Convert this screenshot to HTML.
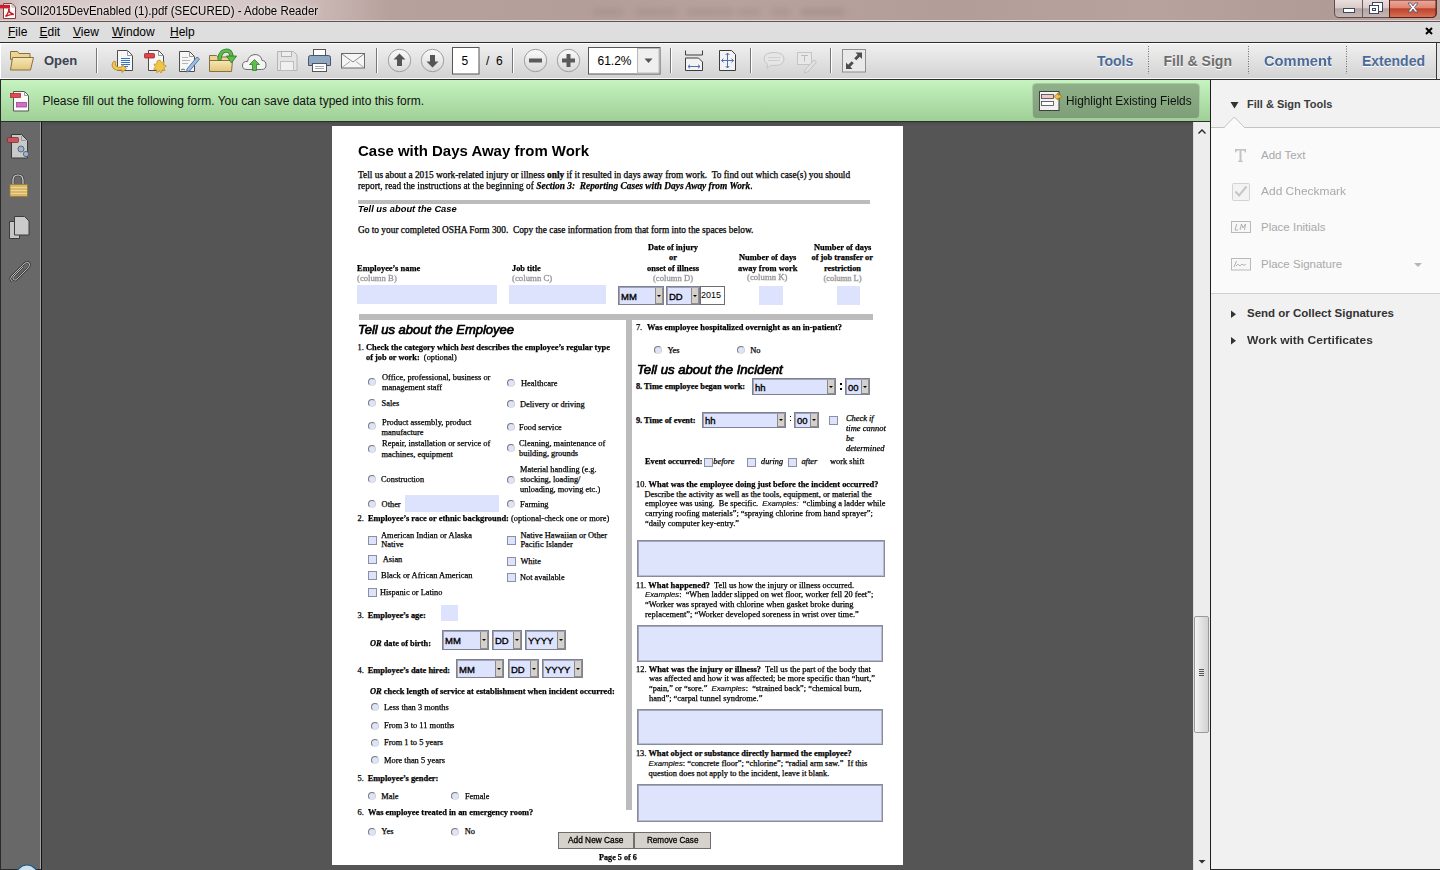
<!DOCTYPE html>
<html><head><meta charset="utf-8"><title>Adobe Reader</title>
<style>
*{margin:0;padding:0;box-sizing:border-box}
html,body{width:1440px;height:870px;overflow:hidden;background:#555555;font-family:"Liberation Sans",sans-serif;position:relative}
.a{position:absolute}
.bx{box-sizing:border-box}
.t{position:absolute;white-space:nowrap;line-height:1;color:#000;transform-origin:0 0}
.se{font-family:"Liberation Serif",serif;-webkit-text-stroke:0.25px #000}
.se.g{-webkit-text-stroke:0.35px #9a9a9a}
.sa{font-family:"Liberation Sans",sans-serif}
i.sa{font-style:italic;font-size:0.93em;-webkit-text-stroke:0.15px #000}
.g{color:#9a9a9a}
.rd{width:8px;height:8px;border-radius:50%;border:1px solid #7a7a7a;border-right-color:#d0d0d0;border-bottom-color:#dcdcdc;background:#dde3fc}
.cb{width:9px;height:9px;border:1px solid #8b8f9f;background:#dde3fc}
.dd{position:absolute;background:#dde3fc;border:1px solid #7c8092;box-shadow:inset 1px 1px 0 #9ea3b8}
.ddl{position:absolute;left:2px;top:1px;font-family:"Liberation Sans",sans-serif;font-size:9.5px;color:#000;-webkit-text-stroke:0.35px #000}
.ddb{position:absolute;right:0.5px;top:0.5px;bottom:0.5px;background:#d5d1ca;border-left:1px solid #8a8a8a;box-shadow:inset -1px -1px 0 #8f8f8f}
.ddb i{position:absolute;left:50%;top:50%;margin-left:-2px;margin-top:-1px;border-left:2px solid transparent;border-right:2px solid transparent;border-top:2px solid #000}
.box2015{position:absolute;background:#fff;border:1px solid #6e6e6e;font-size:9px;line-height:17px;padding-left:0.5px;color:#000}
.colon{font-family:"Liberation Serif",serif;font-size:9px;font-weight:bold;line-height:1}
.mn{color:#000}
.mn u{text-decoration:underline;text-underline-offset:1px}
.tb{font-weight:bold;text-shadow:0 1px 0 #fff}
.rp{font-size:11.5px;color:#a9a9a9}

.hd{-webkit-text-stroke:0.7px #000}
.dot{position:absolute;width:1.6px;height:1.6px;background:#000}
.btn{-webkit-text-stroke:0.3px #000}

</style></head><body>
<div class="a" style="left:0;top:0;width:1440px;height:21px;background:linear-gradient(90deg,#c9b7b4 0%,#d6c9c7 1.5%,#d5c8c6 19%,#c9b6b3 22.5%,#b7a19d 27%,#b49e9a 40%,#b8a29e 52%,#b39d99 66%,#b7a29e 80%,#b19b97 92%,#bba6a3 100%)"></div>
<div class="a" style="left:0;top:0;width:1440px;height:21px;filter:blur(3px);opacity:0.55"><div class="a" style="left:593px;top:9px;width:30px;height:6px;background:#a08a86"></div><div class="a" style="left:635px;top:9px;width:42px;height:6px;background:#a08a86"></div><div class="a" style="left:687px;top:9px;width:46px;height:6px;background:#a08a86"></div><div class="a" style="left:738px;top:9px;width:22px;height:6px;background:#a08a86"></div><div class="a" style="left:771px;top:9px;width:19px;height:6px;background:#a08a86"></div><div class="a" style="left:801px;top:9px;width:44px;height:6px;background:#9a8480"></div></div>
<div class="a" style="left:0;top:20px;width:1440px;height:1px;background:#e3d6d4"></div>
<div class="a" style="left:0;top:21px;width:1440px;height:1px;background:#5e5453"></div>
<div class="a" style="left:0;top:22px;width:1440px;height:20px;background:#dedede"></div>
<div class="a" style="left:0;top:42px;width:1440px;height:1px;background:#2b2b2b"></div>
<div class="a" style="left:0;top:43px;width:1440px;height:36px;background:linear-gradient(#efefef,#e4e4e4 40%,#d3d3d3);border-top:1px solid #fff;border-left:1px solid #fff;border-bottom:1px solid #fafafa"></div>
<div class="a" style="left:1436px;top:43px;width:1px;height:36px;background:#3a3a3a"></div>
<div class="a" style="left:1437px;top:43px;width:3px;height:36px;background:#e6e6e6"></div>
<div class="a" style="left:0;top:79px;width:1440px;height:1px;background:#2f2f2f"></div>
<div class="a" style="left:0;top:80px;width:1210px;height:41px;background:linear-gradient(#c6f3c0,#b4e3ad 45%,#9fd096)"></div>
<div class="a" style="left:0;top:121px;width:41px;height:749px;background:#686868;border-left:1px solid #3a3a3a;border-right:1px solid #a3a3a3"></div>
<div class="a" style="left:41px;top:121px;width:1px;height:749px;background:#111"></div>
<div class="a" style="left:1193px;top:121px;width:17px;height:749px;background:#ededed;border-left:1px solid #dcdcdc"></div>
<div class="a" style="left:1194px;top:616px;width:15px;height:117px;border:1px solid #9a9a9a;border-radius:2px;background:linear-gradient(90deg,#f4f4f4,#e2e2e2 50%,#d2d2d2)"></div>
<div class="a" style="left:1210px;top:80px;width:1px;height:790px;background:#1e1e1e"></div>
<div class="a" style="left:1211px;top:80px;width:229px;height:47px;background:#f2f2f2"></div>
<div class="a" style="left:1211px;top:127px;width:229px;height:166px;background:#fafafa;border-top:1px solid #c3c3c3"></div>
<div class="a" style="left:1211px;top:293px;width:229px;height:577px;background:#f1f1f1;border-top:1px solid #cfcfcf"></div>
<div class="a" style="left:1210px;top:869px;width:230px;height:1px;background:#2a2a2a"></div>
<div class="a" style="left:0;top:869px;width:41px;height:1px;background:#2a2a2a"></div>
<div class="a" style="left:0;top:121px;width:1210px;height:1px;background:#2e2e2e"></div>
<div class="a" style="left:0;top:80px;width:1px;height:790px;background:#2a2a2a"></div>
<div class="a" style="left:42px;top:122px;width:1151px;height:4px;background:linear-gradient(#4a4a4a,#555)"></div>
<!-- highlight button -->
<div class="a" style="left:1032px;top:83px;width:168px;height:36px;border-radius:4px;background:linear-gradient(#8fb089,#7e9f78);border:1px solid #a9c9a3"></div>

<svg class="a" style="left:0;top:0" width="1440" height="870" viewBox="0 0 1440 870">
 <defs>
  <linearGradient id="gmin" x1="0" y1="0" x2="0" y2="1"><stop offset="0" stop-color="#eadfdd"/><stop offset="0.45" stop-color="#d9cbc9"/><stop offset="0.5" stop-color="#b4a3a1"/><stop offset="1" stop-color="#c7b8b6"/></linearGradient>
  <linearGradient id="gcls" x1="0" y1="0" x2="0" y2="1"><stop offset="0" stop-color="#eeaa9c"/><stop offset="0.45" stop-color="#dd8572"/><stop offset="0.5" stop-color="#c0402a"/><stop offset="1" stop-color="#d8735a"/></linearGradient>
  <linearGradient id="gcirc" x1="0" y1="0" x2="0" y2="1"><stop offset="0" stop-color="#fafafa"/><stop offset="1" stop-color="#d9d9d9"/></linearGradient>
  <linearGradient id="gfold" x1="0" y1="0" x2="0" y2="1"><stop offset="0" stop-color="#f7e7b4"/><stop offset="1" stop-color="#e2c67e"/></linearGradient>
 </defs>
 <!-- title pdf icon -->
 <path d="M3.5,3.5 h8.5 l3.5,3.5 v11.5 h-12 z" fill="#fbfbfb" stroke="#8c3a40"/>
 <path d="M12,3.5 v3.5 h3.5" fill="none" stroke="#999" stroke-width="0.8"/>
 <rect x="0" y="4.8" width="10" height="3.6" fill="#c9202f"/>
 <path d="M5.5,16.5 q2,-2 3.5,-6 q0.5,-1.5 0,-1.5 q-0.6,0 -0.2,1.5 q1,3 5,4 q-3,-0.5 -8.3,2 z" fill="none" stroke="#c01a22" stroke-width="1.3"/>
 <!-- window buttons -->
 <path d="M1334.5,0 v13 q0,4.5 4.5,4.5 h93 q4.5,0 4.5,-4.5 v-13" fill="url(#gmin)" stroke="#5b4d4c"/>
 <path d="M1389.5,0 v17.5 h42 q4.5,0 4.5,-4.5 v-13 z" fill="url(#gcls)" stroke="#5a1d12"/>
 <line x1="1362.5" y1="0" x2="1362.5" y2="17.5" stroke="#6a5c5b"/>
 <rect x="1343.5" y="8.5" width="11" height="4" fill="#fff" stroke="#3c4660"/>
 <rect x="1372.5" y="2.5" width="10" height="9" fill="#fff" stroke="#3c4660"/>
 <rect x="1369.5" y="5.5" width="9" height="8" fill="#fff" stroke="#3c4660"/>
 <rect x="1372.5" y="8.5" width="3" height="2" fill="none" stroke="#3c4660"/>
 <path d="M1408,3 l3,0 l2,3 l2,-3 l3,0 l-3.5,4.5 l3.5,4.5 l-3,0 l-2,-3 l-2,3 l-3,0 l3.5,-4.5 z" fill="#fff" stroke="#4a4f66" stroke-width="0.8"/>
 <!-- menu close -->
 <path d="M1426,28 l6,6 M1432,28 l-6,6" stroke="#000" stroke-width="2"/>

 <!-- toolbar: folder open -->
 <path d="M10.5,51.5 h7 l1.5,2 h11 v6 h-19.5 z" fill="#ecd594" stroke="#8b6f3e"/>
 <path d="M12.5,57.5 h21 l-3,12.5 h-20 z" fill="url(#gfold)" stroke="#8b6f3e"/>
 <!-- separators -->
 <g stroke="#777" stroke-width="1">
  <line x1="96.5" y1="48" x2="96.5" y2="73"/><line x1="376.5" y1="48" x2="376.5" y2="73"/><line x1="512.5" y1="48" x2="512.5" y2="73"/>
  <line x1="670.5" y1="48" x2="670.5" y2="73"/><line x1="750.5" y1="48" x2="750.5" y2="73"/><line x1="830.5" y1="48" x2="830.5" y2="73"/>
 </g>
 <g stroke="#fff" stroke-width="1">
  <line x1="97.5" y1="48" x2="97.5" y2="73"/><line x1="377.5" y1="48" x2="377.5" y2="73"/><line x1="513.5" y1="48" x2="513.5" y2="73"/>
  <line x1="671.5" y1="48" x2="671.5" y2="73"/><line x1="751.5" y1="48" x2="751.5" y2="73"/><line x1="831.5" y1="48" x2="831.5" y2="73"/>
 </g>
 <!-- icon1: doc + blue lines + arrow -->
 <path d="M117.5,50.5 h10 l5,5 v15 h-15 z" fill="#f6f6f6" stroke="#4d4d4d"/>
 <path d="M127.5,50.5 v5 h5" fill="none" stroke="#9a9a9a"/>
 <g stroke="#2f74d0" stroke-width="1"><line x1="121" y1="58.5" x2="130" y2="58.5"/><line x1="121" y1="60.5" x2="130" y2="60.5"/><line x1="121" y1="62.5" x2="130" y2="62.5"/><line x1="121" y1="64.5" x2="130" y2="64.5"/><line x1="124" y1="66.5" x2="128" y2="66.5"/></g>
 <path d="M114,61 q-4,4 0,8 q3,2 8,1 v2.5 l4.5,-4 l-4.5,-4 v2.5 q-4,1 -6,-1 q-1.5,-2 0,-4 z" fill="#f2c650" stroke="#b58a2c" stroke-width="0.9"/>
 <!-- icon2: doc + red bar + star -->
 <path d="M148.5,50.5 h10 l5,5 v15 h-15 z" fill="#f6f6f6" stroke="#4d4d4d"/>
 <path d="M158.5,50.5 v5 h5" fill="none" stroke="#9a9a9a"/>
 <rect x="144.5" y="53.5" width="10" height="4.5" rx="0.8" fill="#e2434b" stroke="#9b2a2e" stroke-width="0.8"/>
 <path d="M160,60 l1.4,2.6 l2.8,-0.9 l-0.6,2.9 l2.7,1.3 l-2.4,1.8 l1.2,2.7 l-3,-0.2 l-0.9,2.8 l-2,-2.2 l-2.3,1.9 l-0.3,-2.9 l-2.9,-0.6 l1.8,-2.4 l-1.6,-2.5 l2.9,-0.4 l0.4,-3 z" fill="#f0c648" stroke="#c0922c" stroke-width="0.8"/>
 <!-- icon3: doc + pen -->
 <path d="M179.5,51.5 h10 l5,5 v15 h-15 z" fill="#f6f6f6" stroke="#4d4d4d"/>
 <path d="M189.5,51.5 v5 h5" fill="none" stroke="#9a9a9a"/>
 <g stroke="#b5b5b5"><line x1="182" y1="57.5" x2="188" y2="57.5"/><line x1="182" y1="60.5" x2="190" y2="60.5"/><line x1="182" y1="63.5" x2="188" y2="63.5"/></g>
 <path d="M187,69 l10,-12 l2.5,2 l-10,12 l-3,1 z" fill="#9cc0e8" stroke="#4c6d95" stroke-width="0.9"/>
 <path d="M181,70 q2,-2 4,0" fill="none" stroke="#444" stroke-width="0.8"/>
 <!-- icon4: folder + green arrow -->
 <path d="M209.5,55.5 h7 l1.5,1.5 h12 v5 h-20.5 z" fill="#ecd594" stroke="#8b6f3e"/>
 <path d="M209.5,60.5 h23 l-1,11 h-22 z" fill="url(#gfold)" stroke="#8b6f3e"/>
 <path d="M219.5,59 q0.5,-8 7,-8.5 q4.5,0 5,6" fill="none" stroke="#2f7d25" stroke-width="4.2" stroke-linecap="round"/>
 <path d="M219.5,59 q0.5,-8 7,-8.5 q4.5,0 5,6" fill="none" stroke="#5cbb4c" stroke-width="2.6" stroke-linecap="round"/>
 <path d="M226.5,56 h10 l-5,7 z" fill="#5cbb4c" stroke="#2f7d25" stroke-width="0.9"/>
 <!-- icon5: cloud + arrow -->
 <path d="M247,69.5 q-5,0 -4.5,-4.5 q0.5,-4 5,-3.5 q1,-6.5 7.5,-7 q6,0 7,6 q4,0 4,4.5 q0,4.5 -4.5,4.5 z" fill="#f4f4f4" stroke="#6f6f6f" stroke-width="1"/>
 <path d="M254.5,59.5 l5,5 h-3 v6 h-4 v-6 h-3 z" fill="#5fbd4f" stroke="#2f7e27" stroke-width="0.8"/>
 <!-- icon6: floppy disabled -->
 <path d="M277.5,51.5 h16 l3.5,3.5 v15.5 h-19.5 z" fill="#e4e4e4" stroke="#b4b4b4"/>
 <rect x="281.5" y="51.5" width="10" height="5" fill="#eeeeee" stroke="#b4b4b4"/>
 <rect x="280.5" y="61.5" width="13" height="9" fill="#f0f0f0" stroke="#bdbdbd"/>
 <!-- icon7: printer -->
 <rect x="313.5" y="49.5" width="12" height="7" fill="#fff" stroke="#555"/>
 <path d="M308.5,57.5 q0,-2 2,-2 h18 q2,0 2,2 v8 h-22 z" fill="#8fa9c4" stroke="#47566b"/>
 <rect x="312.5" y="63.5" width="14" height="8" fill="#fff" stroke="#555"/>
 <line x1="315" y1="66.5" x2="324" y2="66.5" stroke="#aaa"/><line x1="315" y1="68.5" x2="324" y2="68.5" stroke="#aaa"/>
 <!-- icon8: mail -->
 <rect x="341.5" y="53.5" width="23" height="14.5" fill="#f5f5f5" stroke="#6b6b6b"/>
 <path d="M342,54 l11,8 l11,-8" fill="none" stroke="#8a8a8a"/>
 <path d="M342,67.5 l8,-6 M364,67.5 l-8,-6" fill="none" stroke="#a8a8a8"/>
 <!-- up/down/minus/plus circles -->
 <g fill="url(#gcirc)" stroke="#9d9d9d" stroke-width="1">
  <circle cx="399.5" cy="60.5" r="11.2"/><circle cx="432.5" cy="60.5" r="11.2"/><circle cx="535.5" cy="60.5" r="11.2"/><circle cx="568.5" cy="60.5" r="11.2"/>
 </g>
 <path d="M399.5,53.5 l6,6 h-3.5 v6.5 h-5 v-6.5 h-3.5 z" fill="#555"/>
 <path d="M432.5,67.5 l6,-6 h-3.5 v-6.5 h-5 v6.5 h-3.5 z" fill="#555"/>
 <rect x="529" y="58.5" width="13" height="4" fill="#5a5a5a"/>
 <rect x="562" y="58.5" width="13" height="4" fill="#5a5a5a"/><rect x="566.5" y="54" width="4" height="13" fill="#5a5a5a"/>
 <!-- page box -->
 <rect x="452.5" y="47.5" width="26.5" height="26.5" fill="#fff" stroke="#575757"/>
 <!-- zoom combo -->
 <rect x="588.5" y="47.5" width="71.5" height="26.5" fill="#fff" stroke="#575757"/>
 <rect x="637.5" y="48.5" width="21.5" height="24.5" fill="#efefef" stroke="#b9b9b9"/>
 <path d="M644.5,58.5 h8 l-4,4.5 z" fill="#555"/>
 <!-- fit width -->
 <path d="M685.5,50.5 v4.5 h17 v-4.5" fill="none" stroke="#3d3d3d"/>
 <path d="M685.5,70.5 v-12.5 h13 l4,4 v8.5 z" fill="#f3f3f3" stroke="#3d3d3d"/>
 <path d="M688,66.5 h12 M688,66.5 l2,-1.8 M688,66.5 l2,1.8 M700,66.5 l-2,-1.8 M700,66.5 l-2,1.8" stroke="#4f6fb0" fill="none"/>
 <!-- fit page -->
 <path d="M719.5,50.5 h12 l4,4 v16 h-16 z" fill="#f3f3f3" stroke="#3d3d3d"/>
 <path d="M727.5,53 v15 M721.5,60.5 h12 M727.5,53 l-1.8,2 M727.5,53 l1.8,2 M727.5,68 l-1.8,-2 M727.5,68 l1.8,-2 M721.5,60.5 l2,-1.8 M721.5,60.5 l2,1.8 M733.5,60.5 l-2,-1.8 M733.5,60.5 l-2,1.8" stroke="#4f6fb0" fill="none"/>
 <!-- comment disabled -->
 <path d="M774,52.5 q10,0 10,6.5 q0,6.5 -10,6.5 q-1.5,0 -3,-0.4 l-4,3.4 l0.8,-4.4 q-3.8,-2 -3.8,-5.1 q0,-6.5 10,-6.5 z" fill="#e6e6e6" stroke="#c5c5c5"/>
 <g stroke="#cfcfcf"><line x1="768" y1="57.5" x2="780" y2="57.5"/><line x1="768" y1="60.5" x2="780" y2="60.5"/></g>
 <!-- text edit disabled -->
 <rect x="797.5" y="52.5" width="14" height="12" fill="#e8e8e8" stroke="#c5c5c5"/>
 <path d="M801,55.5 h7 M804.5,55.5 v6" stroke="#bcbcbc" fill="none"/>
 <path d="M805,70 l9,-10 l2.5,2 l-9,10 l-3,1 z" fill="#e2e2e2" stroke="#c2c2c2"/>
 <!-- fullscreen -->
 <rect x="842.5" y="49.5" width="23" height="22.5" fill="#e9e9e9" stroke="#8d8d8d"/>
 <path d="M862,52.5 l-6.5,0 l2.2,2.2 l-3.5,3.5 l2.1,2.1 l3.5,-3.5 l2.2,2.2 z" fill="#4d4d4d"/>
 <path d="M846,69 l6.5,0 l-2.2,-2.2 l3.5,-3.5 l-2.1,-2.1 l-3.5,3.5 l-2.2,-2.2 z" fill="#4d4d4d"/>
 <!-- right dotted separators -->
 <g stroke="#6f6f6f" stroke-dasharray="1,1.5"><line x1="1148.5" y1="46" x2="1148.5" y2="74"/><line x1="1248.5" y1="46" x2="1248.5" y2="74"/><line x1="1346.5" y1="46" x2="1346.5" y2="74"/></g>

 <!-- green bar form icon -->
 <path d="M13.5,91.5 h11 l4,4 v15.5 h-15 z" fill="#fbfbfb" stroke="#555"/>
 <path d="M24.5,91.5 v4 h4" fill="none" stroke="#999"/>
 <rect x="10.5" y="93.5" width="10" height="4" fill="#e24a4f" stroke="#a33034" stroke-width="0.8"/>
 <rect x="16.5" y="102.5" width="10" height="4.5" fill="#d36ec6" stroke="#9b4a92" stroke-width="0.8"/>
 <!-- highlight fields icon -->
 <rect x="1039.5" y="91.5" width="19.5" height="19" fill="#f2f2f2" stroke="#3f3f3f"/>
 <rect x="1041.5" y="94.5" width="12" height="4" fill="#f4c7c7" stroke="#444" stroke-width="0.8"/>
 <rect x="1041.5" y="101.5" width="12" height="4" fill="#fff" stroke="#444" stroke-width="0.8"/>
 <path d="M1054,96.5 l4,-3.5 v2 h3 v3 h-3 v2 z" fill="#f3c241" stroke="#a57b1d" stroke-width="0.8"/>

 <!-- nav icons -->
 <path d="M11.5,134.5 h10 l6,6 v17.5 h-16 z" fill="#c9c9c9" stroke="#383838"/>
 <path d="M21.5,136 v4.5 h4.5" fill="none" stroke="#8a8a8a" stroke-width="0.8"/>
 <rect x="7.5" y="137.5" width="11" height="5" rx="1" fill="#c9545a" stroke="#7d3034" stroke-width="0.8"/>
 <circle cx="21" cy="149" r="3" fill="#9fb5c8" stroke="#50606e" stroke-width="0.9"/>
 <circle cx="26" cy="154" r="2.6" fill="#9fb5c8" stroke="#50606e" stroke-width="0.9"/>
 <path d="M13,185 v-4.5 q0,-5.5 5,-5.5 q5,0 5,5.5 v4.5" fill="none" stroke="#3c3c3c" stroke-width="2.6"/><path d="M13,185 v-4.5 q0,-5.5 5,-5.5 q5,0 5,5.5 v4.5" fill="none" stroke="#d5d5d5" stroke-width="1.2"/>
 <rect x="10" y="184.5" width="17.5" height="12" fill="#d8b768" stroke="#9b7c35" stroke-width="0.8"/>
 <g stroke="#f2dd9e" stroke-width="0.8"><line x1="10.5" y1="187.5" x2="27" y2="187.5"/><line x1="10.5" y1="190.5" x2="27" y2="190.5"/><line x1="10.5" y1="193.5" x2="27" y2="193.5"/></g>
 <path d="M9.5,221.5 h10 v17 h-10 z" fill="#c6c6c6" stroke="#3c3c3c"/>
 <path d="M14.5,216.5 h10 l4.5,4.5 v14 h-14.5 z" fill="#cbcbcb" stroke="#3c3c3c"/>
 <path d="M12,281 q-3,-2 0,-5 l12,-12 q3,-3 5,-1 q2,2 -1,5 l-11,11 q-2,2 -3.5,0.5 q-1.5,-1.5 0.5,-3.5 l9,-9" fill="none" stroke="#3c3c3c" stroke-width="2.4"/><path d="M12,281 q-3,-2 0,-5 l12,-12 q3,-3 5,-1 q2,2 -1,5 l-11,11 q-2,2 -3.5,0.5 q-1.5,-1.5 0.5,-3.5 l9,-9" fill="none" stroke="#b9b9b9" stroke-width="1"/>
 <!-- start orb -->
 <circle cx="27" cy="876" r="11" fill="#cfe0ea" stroke="#1d5a8a" stroke-width="1.2"/>

 <!-- scrollbar arrows -->
 <path d="M1198.5,133.5 l3.5,-3.5 l3.5,3.5" fill="none" stroke="#222" stroke-width="1.3"/>
 <path d="M1198.5,860 l3.5,3.5 l3.5,-3.5 z" fill="#333"/>
 <g stroke="#555"><line x1="1199" y1="669.5" x2="1204" y2="669.5"/><line x1="1199" y1="671.5" x2="1204" y2="671.5"/><line x1="1199" y1="673.5" x2="1204" y2="673.5"/><line x1="1199" y1="675.5" x2="1204" y2="675.5"/></g>

 <!-- right panel -->
 <path d="M1230.5,102 h8 l-4,6.5 z" fill="#333"/>
 <path d="M1224,127.5 l10.3,-10.5 l10.3,10.5" fill="#fafafa" stroke="#c3c3c3"/>
 <rect x="1225" y="127" width="19" height="2" fill="#fafafa"/>
 <path d="M1235,149 h11 v3.5 h-1 q-0.5,-2 -2,-2 h-1.5 v10 l1.5,0.7 v0.8 h-5 v-0.8 l1.5,-0.7 v-10 h-1.5 q-1.5,0 -2,2 h-1 z" fill="#c3c3c3"/>
 <rect x="1232.5" y="183.5" width="17" height="17" rx="1" fill="#f3f3f3" stroke="#d3d3d3"/>
 <path d="M1235.5,191.5 l3.5,4 l7.5,-9" fill="none" stroke="#c6c6c6" stroke-width="2"/>
 <rect x="1231.5" y="221.5" width="19" height="11" fill="#f7f7f7" stroke="#b9b9b9"/>
 <path d="M1235,230 l1.8,-6 M1235,230 h3 M1240,230 l1.5,-6 l1.5,4 l2.5,-4 l-1,6" fill="none" stroke="#a9a9a9" stroke-width="0.9"/>
 <rect x="1231.5" y="258.5" width="19" height="11.5" fill="#f7f7f7" stroke="#b9b9b9"/>
 <path d="M1234,267 l2.5,-6 M1236,266 q2,-3 3,-1 q1,2 2,0 q1,-2 2,0 q1,1 3,-1" fill="none" stroke="#a9a9a9" stroke-width="0.9"/>
 <path d="M1414,263 h8 l-4,4 z" fill="#b5b5b5"/>
 <path d="M1231,310.5 v7.5 l5,-3.75 z" fill="#333"/>
 <path d="M1231,337 v7.5 l5,-3.75 z" fill="#333"/>
</svg>

<div class="t sa" style="left:20px;top:5px;font-size:12px;color:#000;text-shadow:0 0 6px #efe8e7,0 0 3px #efe8e7;transform:scaleX(0.957)">SOII2015DevEnabled (1).pdf (SECURED) - Adobe Reader</div>
<div class="t sa mn" style="left:8px;top:26px;font-size:12px"><u>F</u>ile</div>
<div class="t sa mn" style="left:39.5px;top:26px;font-size:12px"><u>E</u>dit</div>
<div class="t sa mn" style="left:73px;top:26px;font-size:12px"><u>V</u>iew</div>
<div class="t sa mn" style="left:112px;top:26px;font-size:12px"><u>W</u>indow</div>
<div class="t sa mn" style="left:170px;top:26px;font-size:12px"><u>H</u>elp</div>
<div class="t sa" style="left:44px;top:54px;font-size:13px;font-weight:bold;color:#3a4351">Open</div>
<div class="t sa" style="left:461.5px;top:55px;font-size:12px;color:#000">5</div>
<div class="t sa" style="left:486px;top:55px;font-size:12px;color:#000">/&nbsp; 6</div>
<div class="t sa" style="left:597.5px;top:55px;font-size:12px;color:#000">61.2%</div>
<div class="t sa tb" style="left:1097px;top:54px;font-size:14px;color:#4c6a98">Tools</div>
<div class="t sa tb" style="left:1163.5px;top:54px;font-size:14px;color:#6e6e6e">Fill &amp; Sign</div>
<div class="t sa tb" style="left:1263.5px;top:54px;font-size:14px;color:#4c6a98;transform:scaleX(1.05)">Comment</div>
<div class="t sa tb" style="left:1362px;top:54px;font-size:14px;color:#4c6a98">Extended</div>
<div class="t sa" style="left:42.5px;top:95px;font-size:12px;color:#111">Please fill out the following form. You can save data typed into this form.</div>
<div class="t sa" style="left:1066px;top:95px;font-size:12.4px;color:#111;transform:scaleX(0.955)">Highlight Existing Fields</div>
<div class="t sa" style="left:1247px;top:99px;font-size:11px;font-weight:bold;color:#3b3b3b">Fill &amp; Sign Tools</div>
<div class="t sa rp" style="left:1261px;top:150px">Add Text</div>
<div class="t sa rp" style="left:1261px;top:186px;transform:scaleX(1.04)">Add Checkmark</div>
<div class="t sa rp" style="left:1261px;top:222px">Place Initials</div>
<div class="t sa rp" style="left:1261px;top:259px">Place Signature</div>
<div class="t sa" style="left:1247px;top:308px;font-size:11.5px;font-weight:bold;color:#333">Send or Collect Signatures</div>
<div class="t sa" style="left:1247px;top:335px;font-size:11.5px;font-weight:bold;color:#333;transform:scaleX(1.045)">Work with Certificates</div>

<div class="a " style="left:332.00px;top:126.00px;width:571.00px;height:739.00px;background:#fff"></div>
<div class="a " style="left:358.00px;top:200.00px;width:512.00px;height:3.70px;background:#bcbcbc"></div>
<div class="a " style="left:359.00px;top:314.00px;width:514.00px;height:5.50px;background:#bcbcbc"></div>
<div class="a " style="left:626.00px;top:319.00px;width:6.00px;height:490.70px;background:#bcbcbc"></div>
<div class="a " style="left:357.10px;top:285.00px;width:139.70px;height:18.80px;background:#dde3fc"></div>
<div class="a " style="left:509.00px;top:285.00px;width:97.00px;height:18.80px;background:#dde3fc"></div>
<div class="a dd" style="left:618px;top:286px;width:46px;height:19px"><span class="ddl" style="line-height:17px">MM</span><div class="ddb" style="width:8px"><i></i></div></div>
<div class="a dd" style="left:666px;top:286px;width:34px;height:19px"><span class="ddl" style="line-height:17px">DD</span><div class="ddb" style="width:8px"><i></i></div></div>
<div class="a box2015" style="left:699.6px;top:285.8px;width:25.2px;height:18.8px">2015</div>
<div class="a " style="left:759.00px;top:286.00px;width:24.00px;height:18.50px;background:#dde3fc"></div>
<div class="a " style="left:837.00px;top:286.00px;width:23.00px;height:18.50px;background:#dde3fc"></div>
<div class="a " style="left:405.25px;top:495.25px;width:93.55px;height:16.75px;background:#dde3fc"></div>
<div class="a " style="left:440.90px;top:605.10px;width:16.85px;height:15.80px;background:#dde3fc"></div>
<div class="a dd" style="left:442px;top:630px;width:47px;height:20px"><span class="ddl" style="line-height:18px">MM</span><div class="ddb" style="width:8px"><i></i></div></div>
<div class="a dd" style="left:492px;top:630px;width:30px;height:20px"><span class="ddl" style="line-height:18px">DD</span><div class="ddb" style="width:8px"><i></i></div></div>
<div class="a dd" style="left:525px;top:630px;width:41px;height:20px"><span class="ddl" style="line-height:18px">YYYY</span><div class="ddb" style="width:8px"><i></i></div></div>
<div class="a dd" style="left:456px;top:659px;width:48px;height:19px"><span class="ddl" style="line-height:17px">MM</span><div class="ddb" style="width:8px"><i></i></div></div>
<div class="a dd" style="left:508px;top:659px;width:31px;height:19px"><span class="ddl" style="line-height:17px">DD</span><div class="ddb" style="width:8px"><i></i></div></div>
<div class="a dd" style="left:542px;top:659px;width:41px;height:19px"><span class="ddl" style="line-height:17px">YYYY</span><div class="ddb" style="width:8px"><i></i></div></div>
<div class="a dd" style="left:752px;top:378px;width:84px;height:17px"><span class="ddl" style="line-height:15px">hh</span><div class="ddb" style="width:8px"><i></i></div></div>
<div class="a dd" style="left:845px;top:378px;width:25px;height:17px"><span class="ddl" style="line-height:15px">00</span><div class="ddb" style="width:8px"><i></i></div></div>
<div class="a dd" style="left:702px;top:412px;width:84px;height:16px"><span class="ddl" style="line-height:14px">hh</span><div class="ddb" style="width:8px"><i></i></div></div>
<div class="a dd" style="left:794px;top:412px;width:25px;height:16px"><span class="ddl" style="line-height:14px">00</span><div class="ddb" style="width:8px"><i></i></div></div>
<div class="dot" style="left:840px;top:383px"></div><div class="dot" style="left:840px;top:388px"></div>
<div class="dot" style="left:789.5px;top:415.5px"></div><div class="dot" style="left:789.5px;top:419.5px"></div>
<div class="a bx" style="left:637.00px;top:540.00px;width:248.00px;height:37.00px;background:#dde4fc;border:1px solid #878b9c;box-shadow:inset 1px 1px 0 #a3a7ba,inset -1px -1px 0 #b9bdd0"></div>
<div class="a bx" style="left:637.00px;top:625.00px;width:246.00px;height:37.00px;background:#dde4fc;border:1px solid #878b9c;box-shadow:inset 1px 1px 0 #a3a7ba,inset -1px -1px 0 #b9bdd0"></div>
<div class="a bx" style="left:637.00px;top:709.00px;width:246.00px;height:36.00px;background:#dde4fc;border:1px solid #878b9c;box-shadow:inset 1px 1px 0 #a3a7ba,inset -1px -1px 0 #b9bdd0"></div>
<div class="a bx" style="left:637.00px;top:784.00px;width:246.00px;height:38.00px;background:#dde4fc;border:1px solid #878b9c;box-shadow:inset 1px 1px 0 #a3a7ba,inset -1px -1px 0 #b9bdd0"></div>
<div class="a bx" style="left:558.00px;top:832.10px;width:76.00px;height:16.50px;background:#d6d2cb;border:1px solid #6e6e6e"></div>
<div class="a bx" style="left:634.00px;top:832.10px;width:76.80px;height:16.50px;background:#d6d2cb;border:1px solid #6e6e6e"></div>
<div class="a rd" style="left:368px;top:378px"></div>
<div class="a rd" style="left:507px;top:379px"></div>
<div class="a rd" style="left:368px;top:399px"></div>
<div class="a rd" style="left:507px;top:400px"></div>
<div class="a rd" style="left:368px;top:422px"></div>
<div class="a rd" style="left:507px;top:423px"></div>
<div class="a rd" style="left:368px;top:445px"></div>
<div class="a rd" style="left:507px;top:444px"></div>
<div class="a rd" style="left:368px;top:475px"></div>
<div class="a rd" style="left:507px;top:476px"></div>
<div class="a rd" style="left:368px;top:500px"></div>
<div class="a rd" style="left:507px;top:500px"></div>
<div class="a rd" style="left:371px;top:703px"></div>
<div class="a rd" style="left:371px;top:722px"></div>
<div class="a rd" style="left:371px;top:739px"></div>
<div class="a rd" style="left:371px;top:756px"></div>
<div class="a rd" style="left:368px;top:792px"></div>
<div class="a rd" style="left:451px;top:792px"></div>
<div class="a rd" style="left:368px;top:828px"></div>
<div class="a rd" style="left:451px;top:828px"></div>
<div class="a rd" style="left:654px;top:346px"></div>
<div class="a rd" style="left:737px;top:346px"></div>
<div class="a cb" style="left:368px;top:536px"></div>
<div class="a cb" style="left:368px;top:555px"></div>
<div class="a cb" style="left:368px;top:571px"></div>
<div class="a cb" style="left:368px;top:588px"></div>
<div class="a cb" style="left:507px;top:536px"></div>
<div class="a cb" style="left:507px;top:557px"></div>
<div class="a cb" style="left:507px;top:573px"></div>
<div class="a cb" style="left:829px;top:416px"></div>
<div class="a cb" style="left:704px;top:458px"></div>
<div class="a cb" style="left:747px;top:458px"></div>
<div class="a cb" style="left:788px;top:458px"></div>
<div id="t0" class="t sa " style="left:358.00px;top:143.00px;font-size:15.00px;transform:scaleX(0.9980);"><b>Case with Days Away from Work</b></div>
<div id="t1" class="t se " style="left:358.00px;top:171.00px;font-size:9.36px;">Tell us about a 2015 work-related injury or illness <b>only</b> if it resulted in days away from work.&nbsp; To find out which case(s) you should</div>
<div id="t2" class="t se " style="left:358.00px;top:182.00px;font-size:9.36px;transform:scaleX(1.0029);">report, read the instructions at the beginning of <b><i>Section 3:&nbsp; Reporting Cases with Days Away from Work</i></b>.</div>
<div id="t3" class="t sa " style="left:358.00px;top:205.00px;font-size:9.20px;transform:scaleX(1.0157);"><b><i>Tell us about the Case</i></b></div>
<div id="t4" class="t se " style="left:358.00px;top:226.00px;font-size:9.36px;">Go to your completed OSHA Form 300.&nbsp; Copy the case information from that form into the spaces below.</div>
<div id="t5" class="t se " style="left:357.10px;top:265.00px;font-size:8.40px;transform:scaleX(1.0074);"><b>Employee’s name</b></div>
<div id="t6" class="t se g" style="left:357.10px;top:275.00px;font-size:8.40px;transform:scaleX(1.0367);">(column B)</div>
<div id="t7" class="t se " style="left:512.20px;top:265.00px;font-size:8.40px;transform:scaleX(0.9904);"><b>Job title</b></div>
<div id="t8" class="t se g" style="left:512.20px;top:275.00px;font-size:8.40px;transform:scaleX(1.0497);">(column C)</div>
<div id="t9" class="t se " style="left:648.00px;top:244.00px;font-size:8.40px;transform:scaleX(0.9950);"><b>Date of injury</b></div>
<div id="t10" class="t se c" style="left:673.00px;top:254.00px;font-size:8.40px;transform:translateX(-50%) scaleX(1.0000);transform-origin:50% 0;"><b>or</b></div>
<div id="t11" class="t se " style="left:647.00px;top:265.00px;font-size:8.40px;transform:scaleX(1.0067);"><b>onset of illness</b></div>
<div id="t12" class="t se g" style="left:653.00px;top:275.00px;font-size:8.40px;transform:scaleX(1.0298);">(column D)</div>
<div id="t13" class="t se " style="left:738.60px;top:254.00px;font-size:8.40px;transform:scaleX(1.0054);"><b>Number of days</b></div>
<div id="t14" class="t se " style="left:737.60px;top:265.00px;font-size:8.40px;transform:scaleX(1.0078);"><b>away from work</b></div>
<div id="t15" class="t se g" style="left:746.60px;top:274.00px;font-size:8.40px;transform:scaleX(1.0401);">(column K)</div>
<div id="t16" class="t se " style="left:813.60px;top:244.00px;font-size:8.40px;transform:scaleX(1.0054);"><b>Number of days</b></div>
<div id="t17" class="t se " style="left:811.50px;top:254.00px;font-size:8.40px;"><b>of job transfer or</b></div>
<div id="t18" class="t se c" style="left:842.50px;top:265.00px;font-size:8.40px;transform:translateX(-50%) scaleX(1.0000);transform-origin:50% 0;"><b>restriction</b></div>
<div id="t19" class="t se c g" style="left:842.50px;top:275.00px;font-size:8.40px;transform:translateX(-50%) scaleX(1.0000);transform-origin:50% 0;">(column L)</div>
<div id="t20" class="t sa hd" style="left:357.50px;top:323.00px;font-size:13.00px;transform:scaleX(0.9978);"><i>Tell us about the Employee</i></div>
<div id="t21" class="t se " style="left:357.50px;top:344.00px;font-size:8.40px;">1.</div>
<div id="t22" class="t se " style="left:366.00px;top:344.00px;font-size:8.40px;transform:scaleX(1.0025);"><b>Check the category which <i>best</i> describes the employee’s regular type</b></div>
<div id="t23" class="t se " style="left:366.00px;top:354.00px;font-size:8.40px;transform:scaleX(0.9938);"><b>of job or work:</b>&nbsp; (optional)</div>
<div id="t24" class="t se o" style="left:381.60px;top:374.00px;font-size:8.40px;transform:scaleX(1.0037);">Office, professional, business or</div>
<div id="t25" class="t se o" style="left:381.60px;top:384.00px;font-size:8.40px;transform:scaleX(1.0063);">management staff</div>
<div id="t26" class="t se o" style="left:521.00px;top:380.00px;font-size:8.40px;transform:scaleX(1.0065);">Healthcare</div>
<div id="t27" class="t se o" style="left:381.60px;top:400.00px;font-size:8.40px;">Sales</div>
<div id="t28" class="t se o" style="left:520.00px;top:401.00px;font-size:8.40px;">Delivery or driving</div>
<div id="t29" class="t se o" style="left:381.60px;top:419.00px;font-size:8.40px;transform:scaleX(1.0096);">Product assembly, product</div>
<div id="t30" class="t se o" style="left:381.60px;top:429.00px;font-size:8.40px;">manufacture</div>
<div id="t31" class="t se o" style="left:518.50px;top:424.00px;font-size:8.40px;transform:scaleX(0.9946);">Food service</div>
<div id="t32" class="t se o" style="left:381.60px;top:440.00px;font-size:8.40px;transform:scaleX(1.0098);">Repair, installation or service of</div>
<div id="t33" class="t se o" style="left:381.60px;top:451.00px;font-size:8.40px;">machines, equipment</div>
<div id="t34" class="t se o" style="left:519.00px;top:440.00px;font-size:8.40px;transform:scaleX(1.0057);">Cleaning, maintenance of</div>
<div id="t35" class="t se o" style="left:519.00px;top:450.00px;font-size:8.40px;">building, grounds</div>
<div id="t36" class="t se o" style="left:381.25px;top:476.00px;font-size:8.40px;transform:scaleX(0.9970);">Construction</div>
<div id="t37" class="t se o" style="left:520.40px;top:466.00px;font-size:8.40px;transform:scaleX(0.9967);">Material handling (e.g.</div>
<div id="t38" class="t se o" style="left:520.40px;top:476.00px;font-size:8.40px;">stocking, loading/</div>
<div id="t39" class="t se o" style="left:520.40px;top:486.00px;font-size:8.40px;transform:scaleX(1.0023);">unloading, moving etc.)</div>
<div id="t40" class="t se o" style="left:381.60px;top:501.00px;font-size:8.40px;">Other</div>
<div id="t41" class="t se o" style="left:520.40px;top:501.00px;font-size:8.40px;transform:scaleX(1.0074);">Farming</div>
<div id="t42" class="t se " style="left:357.50px;top:515.00px;font-size:8.40px;">2.</div>
<div id="t43" class="t se " style="left:367.75px;top:515.00px;font-size:8.40px;transform:scaleX(1.0037);"><b>Employee’s race or ethnic background:</b> (optional-check one or more)</div>
<div id="t44" class="t se o" style="left:381.25px;top:532.00px;font-size:8.40px;transform:scaleX(1.0053);">American Indian or Alaska</div>
<div id="t45" class="t se o" style="left:381.25px;top:541.00px;font-size:8.40px;">Native</div>
<div id="t46" class="t se o" style="left:382.75px;top:556.00px;font-size:8.40px;">Asian</div>
<div id="t47" class="t se o" style="left:381.25px;top:572.00px;font-size:8.40px;transform:scaleX(1.0114);">Black or African American</div>
<div id="t48" class="t se o" style="left:380.30px;top:589.00px;font-size:8.40px;transform:scaleX(0.9945);">Hispanic or Latino</div>
<div id="t49" class="t se o" style="left:520.40px;top:532.00px;font-size:8.40px;">Native Hawaiian or Other</div>
<div id="t50" class="t se o" style="left:520.40px;top:541.00px;font-size:8.40px;">Pacific Islander</div>
<div id="t51" class="t se o" style="left:520.40px;top:558.00px;font-size:8.40px;">White</div>
<div id="t52" class="t se o" style="left:520.40px;top:574.00px;font-size:8.40px;transform:scaleX(0.9935);">Not available</div>
<div id="t53" class="t se " style="left:357.50px;top:612.00px;font-size:8.40px;">3.</div>
<div id="t54" class="t se " style="left:367.75px;top:612.00px;font-size:8.40px;"><b>Employee’s age:</b></div>
<div id="t55" class="t se " style="left:370.00px;top:640.00px;font-size:8.40px;transform:scaleX(0.9969);"><b><i>OR</i> date of birth:</b></div>
<div id="t56" class="t se " style="left:357.50px;top:667.00px;font-size:8.40px;">4.</div>
<div id="t57" class="t se " style="left:367.75px;top:667.00px;font-size:8.40px;"><b>Employee’s date hired:</b></div>
<div id="t58" class="t se " style="left:370.00px;top:688.00px;font-size:8.40px;transform:scaleX(1.0034);"><b><i>OR</i> check length of service at establishment when incident occurred:</b></div>
<div id="t59" class="t se o" style="left:384.00px;top:704.00px;font-size:8.40px;transform:scaleX(0.9976);">Less than 3 months</div>
<div id="t60" class="t se o" style="left:384.00px;top:722.00px;font-size:8.40px;transform:scaleX(1.0064);">From 3 to 11 months</div>
<div id="t61" class="t se o" style="left:384.00px;top:739.00px;font-size:8.40px;">From 1 to 5 years</div>
<div id="t62" class="t se o" style="left:384.00px;top:757.00px;font-size:8.40px;transform:scaleX(1.0049);">More than 5 years</div>
<div id="t63" class="t se " style="left:357.50px;top:775.00px;font-size:8.40px;">5.</div>
<div id="t64" class="t se " style="left:367.75px;top:775.00px;font-size:8.40px;"><b>Employee’s gender:</b></div>
<div id="t65" class="t se o" style="left:381.25px;top:793.00px;font-size:8.40px;">Male</div>
<div id="t66" class="t se o" style="left:464.70px;top:793.00px;font-size:8.40px;transform:scaleX(0.9856);">Female</div>
<div id="t67" class="t se " style="left:357.50px;top:809.00px;font-size:8.40px;">6.</div>
<div id="t68" class="t se " style="left:367.75px;top:809.00px;font-size:8.40px;transform:scaleX(1.0059);"><b>Was employee treated in an emergency room?</b></div>
<div id="t69" class="t se o" style="left:381.25px;top:828.00px;font-size:8.40px;">Yes</div>
<div id="t70" class="t se o" style="left:464.70px;top:828.00px;font-size:8.40px;">No</div>
<div id="t71" class="t sa btn" style="left:568.30px;top:836.00px;font-size:9.00px;transform:scaleX(0.9245);">Add New Case</div>
<div id="t72" class="t sa btn" style="left:646.80px;top:836.00px;font-size:9.00px;transform:scaleX(0.9013);">Remove Case</div>
<div id="t73" class="t se " style="left:599.00px;top:854.00px;font-size:8.40px;transform:scaleX(0.9731);"><b>Page 5 of 6</b></div>
<div id="t74" class="t se " style="left:635.90px;top:324.00px;font-size:8.40px;">7.</div>
<div id="t75" class="t se " style="left:646.75px;top:324.00px;font-size:8.40px;transform:scaleX(1.0050);"><b>Was employee hospitalized overnight as an in-patient?</b></div>
<div id="t76" class="t se o" style="left:667.40px;top:347.00px;font-size:8.40px;">Yes</div>
<div id="t77" class="t se o" style="left:750.25px;top:347.00px;font-size:8.40px;">No</div>
<div id="t78" class="t sa hd" style="left:637.00px;top:363.00px;font-size:13.00px;transform:scaleX(1.0113);"><i>Tell us about the Incident</i></div>
<div id="t79" class="t se " style="left:635.90px;top:383.00px;font-size:8.40px;"><b>8. Time employee began work:</b></div>
<div id="t80" class="t se " style="left:635.90px;top:417.00px;font-size:8.40px;"><b>9. Time of event:</b></div>
<div id="t81" class="t se " style="left:846.00px;top:415.00px;font-size:8.40px;"><i>Check if</i></div>
<div id="t82" class="t se " style="left:846.00px;top:425.00px;font-size:8.40px;transform:scaleX(1.0124);"><i>time cannot</i></div>
<div id="t83" class="t se " style="left:846.00px;top:435.00px;font-size:8.40px;"><i>be</i></div>
<div id="t84" class="t se " style="left:846.00px;top:445.00px;font-size:8.40px;transform:scaleX(1.0216);"><i>determined</i></div>
<div id="t85" class="t se " style="left:644.50px;top:458.00px;font-size:8.40px;transform:scaleX(0.9954);"><b>Event occurred:</b></div>
<div id="t86" class="t se " style="left:713.30px;top:458.00px;font-size:8.40px;"><i>before</i></div>
<div id="t87" class="t se " style="left:760.60px;top:458.00px;font-size:8.40px;transform:scaleX(0.9891);"><i>during</i></div>
<div id="t88" class="t se " style="left:801.40px;top:458.00px;font-size:8.40px;"><i>after</i></div>
<div id="t89" class="t se " style="left:829.60px;top:458.00px;font-size:8.40px;transform:scaleX(1.0028);">work shift</div>
<div id="t90" class="t se " style="left:635.90px;top:481.00px;font-size:8.40px;transform:scaleX(1.0022);">10. <b>What was the employee doing just before the incident occurred?</b></div>
<div id="t91" class="t se " style="left:644.50px;top:491.00px;font-size:8.40px;">Describe the activity as well as the tools, equipment, or material the</div>
<div id="t92" class="t se " style="left:644.50px;top:500.00px;font-size:8.40px;transform:scaleX(0.9953);">employee was using.&nbsp; Be specific.&nbsp; <i class="sa">Examples:</i>&nbsp; “climbing a ladder while</div>
<div id="t93" class="t se " style="left:644.50px;top:510.00px;font-size:8.40px;transform:scaleX(1.0026);">carrying roofing materials”; “spraying chlorine from hand sprayer”;</div>
<div id="t94" class="t se " style="left:644.50px;top:520.00px;font-size:8.40px;transform:scaleX(1.0049);">“daily computer key-entry.”</div>
<div id="t95" class="t se " style="left:635.90px;top:582.00px;font-size:8.40px;transform:scaleX(1.0054);">11. <b>What happened?</b>&nbsp; Tell us how the injury or illness occurred.</div>
<div id="t96" class="t se " style="left:644.50px;top:591.00px;font-size:8.40px;transform:scaleX(0.9975);"><i class="sa">Examples</i>:&nbsp; “When ladder slipped on wet floor, worker fell 20 feet”;</div>
<div id="t97" class="t se " style="left:644.50px;top:601.00px;font-size:8.40px;transform:scaleX(1.0060);">“Worker was sprayed with chlorine when gasket broke during</div>
<div id="t98" class="t se " style="left:644.50px;top:611.00px;font-size:8.40px;transform:scaleX(1.0091);">replacement”; “Worker developed soreness in wrist over time.”</div>
<div id="t99" class="t se " style="left:635.90px;top:666.00px;font-size:8.40px;transform:scaleX(1.0096);">12. <b>What was the injury or illness?</b>&nbsp; Tell us the part of the body that</div>
<div id="t100" class="t se " style="left:648.60px;top:675.00px;font-size:8.40px;transform:scaleX(1.0054);">was affected and how it was affected; be more specific than “hurt,”</div>
<div id="t101" class="t se " style="left:648.60px;top:685.00px;font-size:8.40px;transform:scaleX(0.9963);">“pain,” or “sore.”&nbsp; <i class="sa">Examples</i>:&nbsp; “strained back”; “chemical burn,</div>
<div id="t102" class="t se " style="left:648.60px;top:695.00px;font-size:8.40px;transform:scaleX(1.0074);">hand”; “carpal tunnel syndrome.”</div>
<div id="t103" class="t se " style="left:635.90px;top:750.00px;font-size:8.40px;">13. <b>What object or substance directly harmed the employee?</b></div>
<div id="t104" class="t se " style="left:648.60px;top:760.00px;font-size:8.40px;"><i class="sa">Examples</i>: “concrete floor”; “chlorine”; “radial arm saw.”&nbsp; If this</div>
<div id="t105" class="t se " style="left:648.60px;top:770.00px;font-size:8.40px;">question does not apply to the incident, leave it blank.</div>
</body></html>
